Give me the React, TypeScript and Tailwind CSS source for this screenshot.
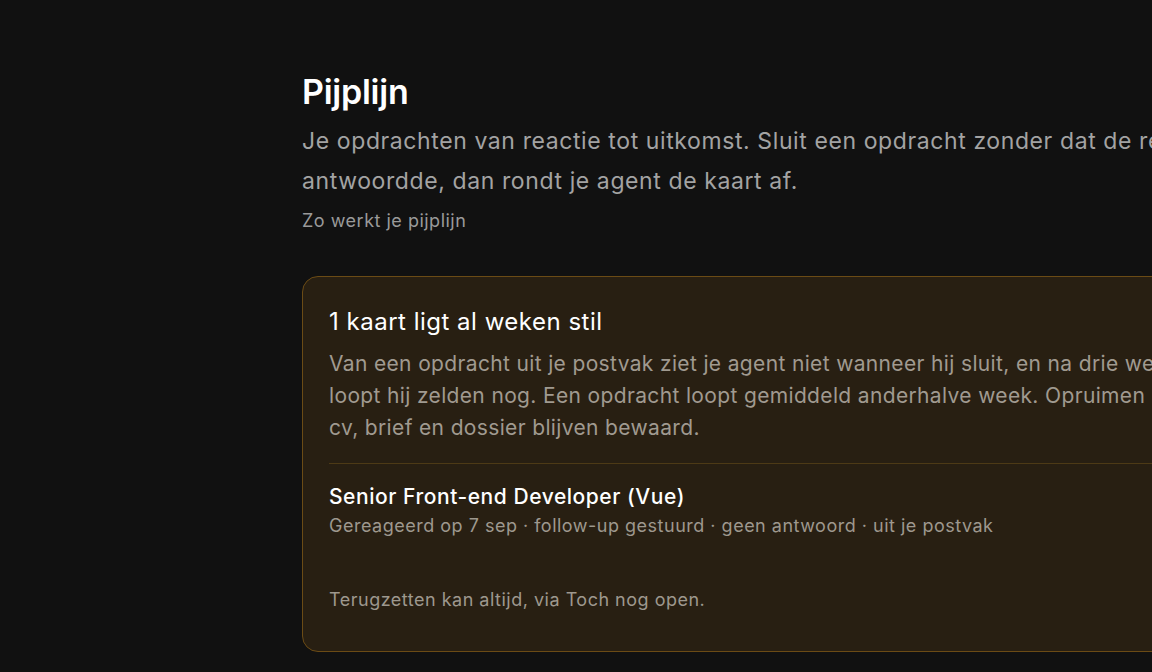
export default function App() {
  return (
    <div
      className="h-[672px] w-[1152px] overflow-hidden bg-[#111111] text-white"
      style={{ fontFamily: "Inter, 'Noto Sans', sans-serif" }}
    >
      <div className="box-content w-[944px] pl-[302px] pt-[70px]">
        <h1 className="text-[34px] font-semibold leading-[44px] tracking-[-0.25px]">Pijplijn</h1>
        <p className="mt-[7px] text-[23px] leading-[40px] tracking-[0.6px] text-[#a3a3a3]">
          Je opdrachten van reactie tot uitkomst. Sluit een opdracht zonder dat de recruiter
          antwoordde, dan rondt je agent de kaart af.
        </p>
        <p className="mt-[7px] text-[18px] leading-[26px] tracking-[0.5px] text-[#9a9a9a]">Zo werkt je pijplijn</p>

        <div className="mt-[42px] rounded-[16px] border border-[#6b4b15] bg-[#281f12] px-[26px] pt-[29px] pb-[38px]">
          <h2 className="text-[24px] font-normal leading-[32px] tracking-[0.5px] text-white">1 kaart ligt al weken stil</h2>
          <p className="mt-[10px] text-[21px] leading-[32px] tracking-[0.35px] text-[#a09a90]">
            Van een opdracht uit je postvak ziet je agent niet wanneer hij sluit, en na drie weken
            loopt hij zelden nog. Een opdracht loopt gemiddeld anderhalve week. Opruimen kan:
            cv, brief en dossier blijven bewaard.
          </p>
          <div className="mt-[19px] border-t border-[#4d3a16]" />
          <div className="pt-[18px]">
            <p className="text-[21px] font-medium leading-[30px] tracking-[0.55px] text-white">
              Senior Front-end Developer (Vue)
            </p>
            <p className="mt-[1px] text-[18px] leading-[26px] tracking-[0.5px] text-[#9e988e]">
              Gereageerd op 7 sep · follow-up gestuurd · geen antwoord · uit je postvak
            </p>
          </div>
          <p className="mt-[48px] text-[18px] leading-[26px] tracking-[0.5px] text-[#9e988e]">
            Terugzetten kan altijd, via Toch nog open.
          </p>
        </div>
      </div>
    </div>
  );
}
